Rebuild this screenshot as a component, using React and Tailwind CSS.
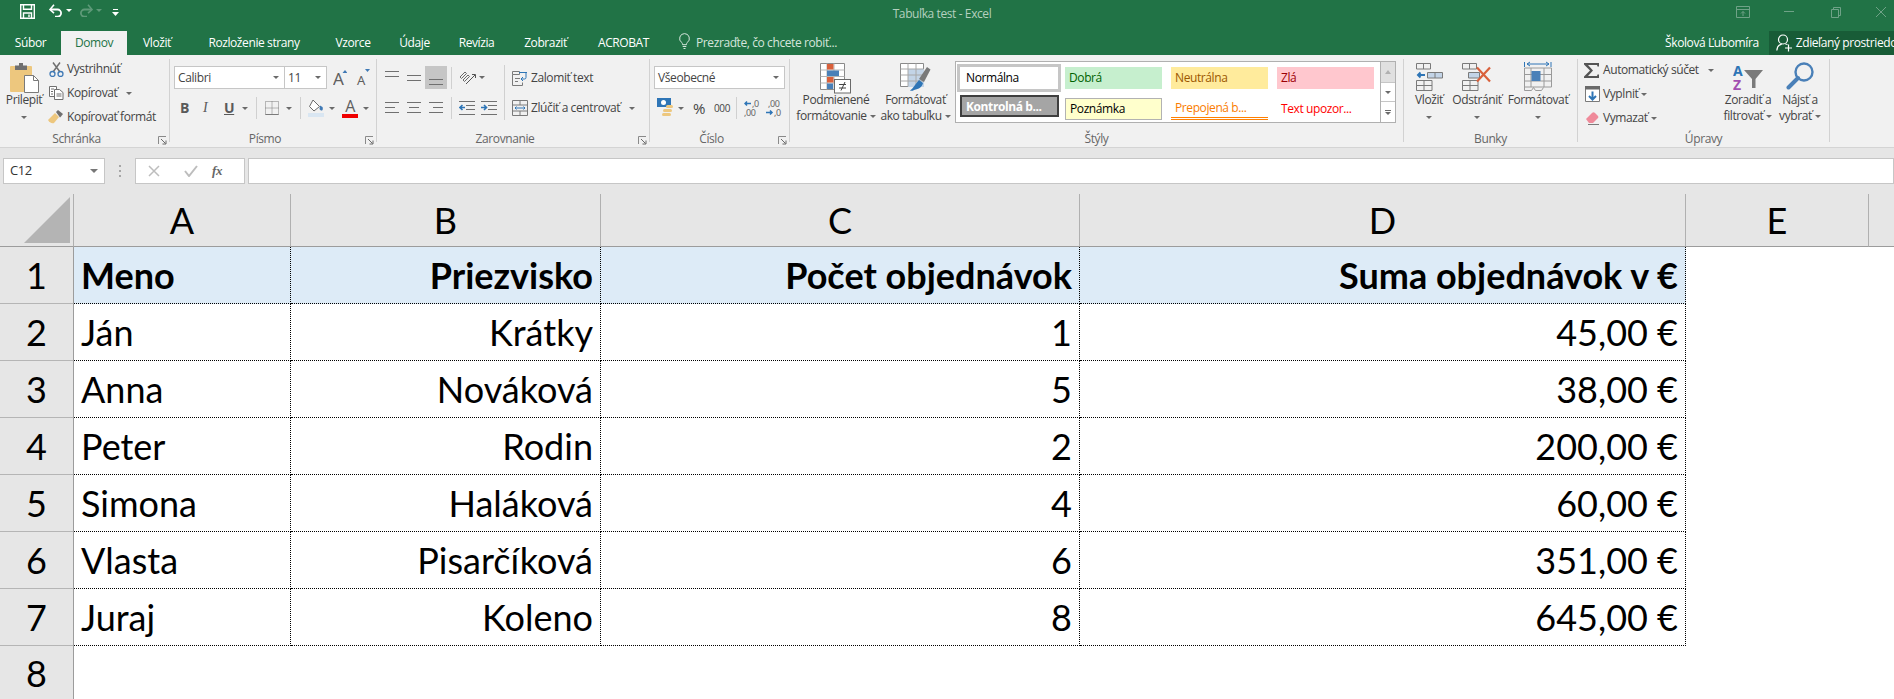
import React from "react";

const G = "#6a6a6a";
const Caret = ({ className = "" }) => (
  <span className={`inline-block w-0 h-0 shrink-0 border-x-[3px] border-x-transparent border-t-[3px] border-t-[#6a6a6a] ${className}`} />
);
const WCaret = () => <span className="inline-block w-0 h-0 shrink-0 ml-[3px] align-middle border-x-[3px] border-x-transparent border-t-[3px] border-t-[#6a6a6a]" />;
const Sep = ({ className = "" }) => <div className={`w-px bg-[#d0d0d0] shrink-0 ${className}`} />;
const Launcher = () => (
  <svg width="9" height="9" viewBox="0 0 9 9" className="absolute right-[2px] bottom-[-3px]">
    <path d="M.5 8V.5H8" fill="none" stroke="#8a8a8a" />
    <path d="M3 3l4.5 4.5M8 4.5V8H4.5" fill="none" stroke="#6a6a6a" />
  </svg>
);

function Group({ w, label, launcher, children }) {
  return (
    <div className={`${w} h-[92px] pt-[4px] pb-[5px] shrink-0`}>
      <div className="h-full border-r border-[#d2d2d2] relative flex flex-col">
        <div className="h-[73px] shrink-0 flex">{children}</div>
        <div className={`h-[14px] shrink-0 leading-[14px] text-center text-[#666666] ${launcher ? "pr-[16px]" : ""}`}>{label}</div>
        {launcher && <Launcher />}
      </div>
    </div>
  );
}

/* ---------- icons ---------- */
const Save = () => (
  <svg width="15" height="15" viewBox="0 0 15 15" fill="none" stroke="#fff" strokeWidth="1.4">
    <path d="M.7.7h13.6v13.6H.7z" />
    <path d="M3.5.7v4.6h8V.7M3.5 14.3V9h8v5.3" />
    <path d="M9 10.5v2.5" />
  </svg>
);
const Undo = ({ c = "#fff" }) => (
  <svg width="14" height="14" viewBox="0 0 14 14" fill="none" stroke={c} strokeWidth="1.8">
    <path d="M1.5 6.5h7a3.6 3.6 0 0 1 0 7.2H6" />
    <path d="M5 1.8L1 6.5l4 3.6" strokeWidth="1.6" />
  </svg>
);
const Redo = ({ c = "#5f9a79" }) => (
  <svg width="14" height="14" viewBox="0 0 14 14" fill="none" stroke={c} strokeWidth="1.8">
    <path d="M12.5 6.5h-7a3.6 3.6 0 0 0 0 7.2H8" />
    <path d="M9 1.8l4 4.7-4 3.6" strokeWidth="1.6" />
  </svg>
);
const Qat = () => (
  <svg width="7" height="8" viewBox="0 0 7 8" fill="#fff">
    <path d="M1 0h5v1H1zM0 3h7L3.5 7z" />
  </svg>
);
const Bulb = () => (
  <svg width="11" height="17" viewBox="0 0 11 17" fill="none" stroke="#d5e5dc" strokeWidth="1">
    <path d="M5.5.6a4.9 4.9 0 0 0-2.8 8.9c.6.5.8 1.300.8 2.200h4c0-.9.2-1.700.8-2.200A4.900 4.900 0 0 0 5.500.6z" />
    <path d="M3.700 13.500h3.600M4.500 15.500h2" />
  </svg>
);
const Person = () => (
  <svg width="17" height="18" viewBox="0 0 17 18" fill="none" stroke="#fff" strokeWidth="1.2">
    <circle cx="7" cy="5.500" r="4.500" />
    <path d="M.8 16.500c.3-3.500 2.500-6 5-6.400M11.500 10.500c-.9-.4-1.600-.5-2.200-.5" />
    <path d="M12.500 10.500v7M9 14h7" />
  </svg>
);
const Paste = () => (
  <svg width="29" height="30" viewBox="0 0 29 30">
    <rect x="0" y="3" width="22" height="26" rx="1" fill="#edc77e" />
    <path d="M5 2.500h12v4.500H5z" fill="#6f6f6f" />
    <rect x="9" y="0" width="4" height="3" fill="#6f6f6f" />
    <path d="M14.500 12.500h9l5 5v12h-14z" fill="#fff" stroke="#7a7a7a" />
    <path d="M23.500 12.500v5h5" fill="none" stroke="#7a7a7a" />
  </svg>
);
const Scissors = () => (
  <svg width="15" height="15" viewBox="0 0 15 15" fill="none">
    <path d="M4 10L11 .5M11 10L4 .5" stroke="#6f6f6f" strokeWidth="1.500" />
    <circle cx="3.500" cy="12" r="2.500" stroke="#3f79b5" strokeWidth="1.300" />
    <circle cx="11.500" cy="12" r="2.500" stroke="#3f79b5" strokeWidth="1.300" />
  </svg>
);
const Copy = () => (
  <svg width="15" height="14" viewBox="0 0 15 14" fill="#fff" stroke="#6f6f6f">
    <path d="M.5.500h7v10h-7z" />
    <path d="M5.500 3.500h5l3.500 3v7h-8.500z" />
    <path d="M2 3h3M2 5.500h2M2 8h2M7.500 8h5M7.500 10h5" fill="none" />
  </svg>
);
const Brush = () => (
  <svg width="16" height="14" viewBox="0 0 16 14">
    <path d="M0 10l7-7 4 4-5 6c-2 1-5-1-6-3z" fill="#edc77e" />
    <path d="M8 2l2-2 5 4-2 2.500-1 1z" fill="#6f6f6f" />
  </svg>
);
const BigA = ({ up }) => (
  <svg width="14" height="17" viewBox="0 0 14 17" className="shrink-0">
    <text x={up ? 0 : 1} y={16} fontSize={up ? 17 : 13} fill="#5f5f5f" fontFamily="Noto Sans">A</text>
    <path d={up ? "M9.500 4L12 1l2.500 3z" : "M9 0h5L11.500 3z"} fill="#3f79b5" />
  </svg>
);
const BordersIc = () => (
  <svg width="14" height="14" viewBox="0 0 14 14" fill="none" stroke="#7a7a7a" strokeDasharray="1 1">
    <path d="M.5.500h13v13H.5zM7 .5v13M.5 7h13" />
    <path d="M.5 13.500h13" strokeDasharray="none" />
  </svg>
);
const Fill = () => (
  <svg width="16" height="18" viewBox="0 0 16 18">
    <path d="M5 1l6.500 6.500L6 12 1.500 7.500z" fill="#fff" stroke="#6a6a6a" />
    <path d="M12 6.500l2.500 1.500c.6 1.500.3 3-.5 3.500-1 .3-2-.5-2.500-1.500z" fill="#3f79b5" />
    <rect x="0" y="14" width="16" height="4" fill="#d9e6f2" />
  </svg>
);
const FontA = () => (
  <div className="relative w-[16px] h-[20px] shrink-0 flex flex-col items-center">
    <span className="text-[16px] leading-[16px] text-[#5f5f5f]">A</span>
    <div className="w-[16px] h-[4px] bg-[#f00000] mt-[0px]" />
  </div>
);
const Lines = ({ ys, x1 = [0, 0, 0], x2 = [14, 14, 14], className = "" }) => (
  <svg width="14" height="20" viewBox="0 0 14 20" className={`shrink-0 ${className}`}>
    {ys.map((y, i) => (
      <path key={i} d={`M${x1[i]} ${y + 0.5}H${x2[i]}`} stroke="#707070" />
    ))}
  </svg>
);
const Orient = () => (
  <svg width="17" height="17" viewBox="0 0 17 17" fill="none" stroke="#6a6a6a">
    <path d="M1 8l5-5 1.500 1.500-5 5zM4 11l5-5 1.500 1.500-5 5z" />
    <path d="M7 15L16 6M13 5.500h3.500V9" stroke="#555" />
  </svg>
);
const Indent = ({ rev }) => (
  <svg width="16" height="15" viewBox="0 0 16 15" fill="none">
    <path d="M0 .5h16M7 4.500h9M7 8.500h9M0 13.500h16" stroke="#707070" />
    <path d={rev ? "M0 6.500h5M3 4l2.500 2.500L3 9" : "M6 6.500H1M3.500 4L1 6.500 3.500 9"} stroke="#2e75b6" strokeWidth="1.600" />
  </svg>
);
const Wrap = () => (
  <svg width="16" height="17" viewBox="0 0 16 17" fill="none">
    <path d="M.5 2.500h7v3h-7zM.5 5.500v11h10v-3" stroke="#7a7a7a" />
    <path d="M3 9.500h5M3 12.500h3" stroke="#7a7a7a" />
    <path d="M7 3.500h8M14 4v4.500a1.500 1.500 0 0 1-1.500 1.500H9M11 8l-2 2 2 2" stroke="#2e75b6" />
  </svg>
);
const Merge = () => (
  <svg width="16" height="16" viewBox="0 0 16 16" fill="none">
    <path d="M.5.500h15v15H.5zM.5 5h15M.5 11h15M8 .5V5M8 11v4.500" stroke="#7a7a7a" />
    <path d="M3 8h10M4.500 6.500L3 8l1.500 1.500M11.500 6.500L13 8l-1.500 1.500" stroke="#2e75b6" />
  </svg>
);
const Currency = () => (
  <svg width="18" height="20" viewBox="0 0 18 20">
    <rect x="0" y="0" width="14" height="9" fill="#2e75b6" />
    <circle cx="6.500" cy="4.500" r="2.500" fill="#fff" />
    <rect x="9" y="7" width="7" height="3" rx="1.500" fill="#edc77e" />
    <rect x="6" y="11" width="9" height="3" rx="1.500" fill="#edc77e" />
    <rect x="5" y="15" width="9" height="3" rx="1.500" fill="#edc77e" />
  </svg>
);
const DecInc = () => (
  <svg width="17" height="17" viewBox="0 0 17 17">
    <path d="M7 3.500H1M3 1.500l-2 2 2 2" fill="none" stroke="#2e75b6" strokeWidth="1.500" />
    <text x="8" y="7" fontSize="9" fill="#666" fontFamily="Noto Sans">,0</text>
    <text x="0" y="16" fontSize="9" fill="#666" fontFamily="Noto Sans">,00</text>
  </svg>
);
const DecDec = () => (
  <svg width="17" height="17" viewBox="0 0 17 17">
    <text x="2" y="7" fontSize="9" fill="#666" fontFamily="Noto Sans">,00</text>
    <path d="M0 12.500h6M4 10.500l2 2-2 2" fill="none" stroke="#2e75b6" strokeWidth="1.500" />
    <text x="8" y="16" fontSize="9" fill="#666" fontFamily="Noto Sans">,0</text>
  </svg>
);
const CondFmt = () => (
  <svg width="32" height="31" viewBox="0 0 32 31">
    <path d="M.5.500h24v26H.5z" fill="#fff" stroke="#8a8a8a" />
    <path d="M.5 7h24M.5 13.500h24M.5 20h24M7 .5v26M14 .5v26" stroke="#b5b5b5" fill="none" />
    <rect x="7" y="1" width="6.500" height="5.500" fill="#d9603b" />
    <rect x="7" y="7.500" width="12" height="5.500" fill="#4a80b8" />
    <rect x="7" y="14" width="6.500" height="5.500" fill="#d9603b" />
    <rect x="7" y="20.500" width="6" height="5.500" fill="#4a80b8" />
    <rect x="14.500" y="16.500" width="16" height="13.500" fill="#fff" stroke="#6a6a6a" />
    <path d="M19 21.500h7M19 25h7M25 19l-4 8.500" stroke="#444" fill="none" />
  </svg>
);
const FmtTable = () => (
  <svg width="31" height="30" viewBox="0 0 31 30">
    <path d="M.5.500h23v23H.5z" fill="#fff" stroke="#8a8a8a" />
    <rect x="8" y="6" width="16" height="18" fill="#c3d4e7" />
    <path d="M.5 6h23M.5 12h23M.5 18h23M8 .5v23M16 .5v23" stroke="#a8a8a8" fill="none" />
    <path d="M19 16L27 4l3.500 2.500L24 19z" fill="#7a7a7a" />
    <path d="M19 17l4 3c-1 4-4 6-9 7-1 1-3 1-4 .5 3-2 5-6 9-10.500z" fill="#2e75b6" />
  </svg>
);
const CellsIns = () => (
  <svg width="27" height="28" viewBox="0 0 27 28" fill="none">
    <path d="M.5.500h14v5.500H.5zM7.500.5v5.500M.5 17.500h15.500v10H.5zM.5 22.500h15.500M8 17.500v10" stroke="#7a7a7a" />
    <path d="M11.500 9.500h15v5.500h-15zM19 9.500v5.500" fill="#c3d4e7" stroke="#7a7a7a" />
    <path d="M9 12H2M4.500 9.500L2 12l2.500 2.500" stroke="#2e75b6" strokeWidth="2" />
  </svg>
);
const CellsDel = () => (
  <svg width="30" height="28" viewBox="0 0 30 28" fill="none">
    <path d="M.5.500h14v5.500H.5zM7.500.5v5.500M.5 17.500h15.500v10H.5zM.5 22.500h15.500M8 17.500v10" stroke="#7a7a7a" />
    <path d="M6.500 9.500h11v5.500h-11z" fill="#c3d4e7" stroke="#7a7a7a" />
    <path d="M15 4.500l13 14M28 4.500l-13 14" stroke="#d9603b" strokeWidth="2.200" />
  </svg>
);
const CellsFmt = () => (
  <svg width="28" height="30" viewBox="0 0 28 30" fill="none">
    <path d="M.5 1v5M27 1v5M3 3h22M6 1L3 3l3 2M22 1l3 2-3 2" stroke="#2e75b6" />
    <path d="M.5 7h27v19H.5zM.5 13.500h27M.5 20h27M7 7v19M20 7v19M.5 26v3.500h7l2-3 2 3h6l2-3" stroke="#9a9a9a" />
    <rect x="7.500" y="10" width="9" height="10" fill="#4a80b8" />
  </svg>
);
const Sigma = () => (
  <svg width="16" height="15" viewBox="0 0 16 15">
    <path d="M0 0h15v3.500h-1.500L13 2H4l5 5.500L4 13h9l.5-1.500H15V15H0v-1.500L6 7.500 0 1.500z" fill="#555" />
  </svg>
);
const FillDown = () => (
  <svg width="15" height="16" viewBox="0 0 15 16" fill="none">
    <path d="M.5.500h14v15H.5z" fill="#fff" stroke="#7a7a7a" />
    <rect x="0" y="0" width="15" height="3.500" fill="#6a6a6a" />
    <path d="M7.500 5.500v7.500M4 10l3.500 3.500L11 10" stroke="#2e75b6" strokeWidth="2" />
  </svg>
);
const Eraser = () => (
  <svg width="14" height="13" viewBox="0 0 14 13">
    <path d="M1 7l6-6c1-1 2-1 3 0l3 3c.5 1 .5 1.500 0 2l-5 5H4z" fill="#ef8a9a" />
    <path d="M3 12.500h11" stroke="#7a7a7a" />
  </svg>
);
const Sort = () => (
  <svg width="30" height="27" viewBox="0 0 30 27">
    <text x="0" y="12" fontSize="14" fontWeight="700" fill="#2e75b6" fontFamily="Noto Sans">A</text>
    <text x="0" y="26" fontSize="14" fontWeight="700" fill="#a24fb0" fontFamily="Noto Sans">Z</text>
    <path d="M11 6h19l-7.500 9v9h-3.500v-9z" fill="#7a7a7a" />
  </svg>
);
const Find = () => (
  <svg width="28" height="28" viewBox="0 0 28 28" fill="none">
    <circle cx="18" cy="10" r="8.500" stroke="#4a80b8" strokeWidth="2.400" />
    <path d="M12 16L2.500 25.500" stroke="#4a80b8" strokeWidth="4" strokeLinecap="round" />
  </svg>
);

/* ---------- title + tabs ---------- */
const Tab = ({ w, children }) => <div className={`${w} h-[24px] leading-[24px] text-center text-white shrink-0 whitespace-nowrap`}>{children}</div>;

function TitleBar() {
  return (
    <div className="bg-[#217346] h-[55px]">
      <div className="h-[31px] flex items-start relative">
        <div className="ml-[20px] mt-[4px]"><Save /></div>
        <div className="ml-[14px] mt-[3px]"><Undo /></div>
        <span className="ml-[3px] mt-[9px] w-0 h-0 border-x-[3px] border-x-transparent border-t-[3px] border-t-white" />
        <div className="ml-[7px] mt-[3px]"><Redo /></div>
        <span className="ml-[3px] mt-[9px] w-0 h-0 border-x-[3px] border-x-transparent border-t-[3px] border-t-[#5f9a79]" />
        <div className="ml-[10px] mt-[9px]"><Qat /></div>
        <div className="ml-[773px] w-[100px] mt-[6px] h-[16px] leading-[16px] text-center whitespace-nowrap text-[#b4d0bf]">Tabuľka test - Excel</div>
        <svg className="ml-[744px] mt-[6px]" width="15" height="13" viewBox="0 0 15 13" fill="none" stroke="#6fa287">
          <path d="M.5.500h13v11H.5zM.5 3.500h13M7 10V5.500M5 7.500l2-2 2 2" />
        </svg>
        <div className="ml-[33px] mt-[11px] w-[10px] h-px bg-[#6fa287]" />
        <svg className="ml-[37px] mt-[7px]" width="10" height="11" viewBox="0 0 10 11" fill="none" stroke="#6fa287">
          <path d="M.5 2.500h7v8h-7zM2.500 2.500v-2h7v8h-2" />
        </svg>
        <svg className="ml-[35px] mt-[7px]" width="10" height="10" viewBox="0 0 10 10" stroke="#6fa287"><path d="M0 0l10 10M10 0L0 10" /></svg>
      </div>
      <div className="h-[24px] flex">
        <Tab w="w-[61px]">Súbor</Tab>
        <div className="w-[66px] h-[24px] leading-[24px] text-center bg-[#f1f1f1] text-[#217346] shrink-0">Domov</div>
        <Tab w="w-[60px]">Vložiť</Tab>
        <Tab w="w-[134px]">Rozloženie strany</Tab>
        <Tab w="w-[64px]">Vzorce</Tab>
        <Tab w="w-[59px]">Údaje</Tab>
        <Tab w="w-[65px]">Revízia</Tab>
        <Tab w="w-[73px]">Zobraziť</Tab>
        <Tab w="w-[83px]">ACROBAT</Tab>
        <div className="ml-[14px] self-start mt-[2px]"><Bulb /></div>
        <div className="ml-[6px] h-[24px] leading-[24px] whitespace-nowrap text-[#d5e5dc] w-[145px]">Prezraďte, čo chcete robiť...</div>
        <div className="ml-[828px] w-[95px] h-[24px] leading-[24px] whitespace-nowrap text-white text-center">Školová Ľubomíra</div>
        <div className="ml-[10px] w-[135px] h-[24px] bg-[#185c37] flex items-center overflow-hidden text-white">
          <div className="ml-[7px] shrink-0"><Person /></div>
          <span className="ml-[3px] whitespace-nowrap">Zdieľaný prostriedok</span>
        </div>
      </div>
    </div>
  );
}

/* ---------- ribbon ---------- */
const SmallRow = ({ icon, text, caret, caretClass = "ml-[4px]" }) => (
  <div className="h-[24px] flex items-center whitespace-nowrap">
    <div className="w-[16px] shrink-0 flex justify-center">{icon}</div>
    <span className="ml-[3px]">{text}</span>
    {caret && <Caret className={caretClass} />}
  </div>
);
const BigBtn = ({ w, icon, top, l1, l2, caret2 }) => (
  <div className={`${w} shrink-0 flex flex-col items-center`}>
    <div className={`${top} h-[33px] flex items-start justify-center`}>{icon}</div>
    <div className="h-[16px] leading-[16px] whitespace-nowrap">{l1}</div>
    <div className="h-[16px] leading-[16px] whitespace-nowrap flex items-center justify-center">{l2}{caret2 && <Caret className={l2 ? "ml-[3px]" : "mt-[3px]"} />}</div>
  </div>
);
const Select = ({ w, text, cls = "" }) => (
  <div className={`${w} h-[23px] bg-white border border-[#c6c6c6] flex items-center justify-between pl-[3px] pr-[5px] shrink-0 ${cls}`}>
    <span>{text}</span><Caret />
  </div>
);
const Style = ({ children, cls }) => (
  <div className={`h-[22px] leading-[20px] pl-[4px] whitespace-nowrap overflow-hidden ${cls}`}>{children}</div>
);

function Ribbon() {
  return (
    <div className="h-[93px] bg-[#f1f1f1] border-b border-[#d4d4d4] flex text-[#444444]">
      <Group w="w-[170px]" label="Schránka" launcher>
        <BigBtn w="w-[48px]" top="pt-[4px]" icon={<Paste />} l1="Prilepiť" l2="" caret2 />
        <div className="-mt-[2px]">
          <SmallRow icon={<Scissors />} text="Vystrihnúť" />
          <SmallRow icon={<Copy />} text="Kopírovať" caret caretClass="ml-[9px]" />
          <SmallRow icon={<Brush />} text="Kopírovať formát" />
        </div>
      </Group>

      <Group w="w-[207px]" label="Písmo" launcher>
        <div className="pt-[7px]">
          <div className="flex items-center">
            <Select w="w-[111px] ml-[4px]" text="Calibri" />
            <Select w="w-[43px]" text="11" cls="-ml-px" />
            <div className="ml-[6px]"><BigA up /></div>
            <div className="ml-[9px]"><BigA /></div>
          </div>
          <div className="mt-[7px] h-[24px] flex items-center text-[#5a5a5a]">
            <span className="ml-[10px] w-[8px] text-[14px] font-bold leading-none">B</span>
            <span className="ml-[15px] w-[7px] text-[14px] italic leading-none font-['Liberation_Serif']">I</span>
            <span className="ml-[14px] w-[10px] text-[14px] font-bold leading-none underline">U</span>
            <Caret className="ml-[8px]" />
            <Sep className="ml-[8px] h-[22px]" />
            <div className="ml-[8px]"><BordersIc /></div>
            <Caret className="ml-[7px]" />
            <Sep className="ml-[8px] h-[22px]" />
            <div className="ml-[7px]"><Fill /></div>
            <Caret className="ml-[5px]" />
            <div className="ml-[7px]"><FontA /></div>
            <Caret className="ml-[5px]" />
          </div>
        </div>
      </Group>

      <Group w="w-[273px]" label="Zarovnanie" launcher>
        <div className="pt-[7px] w-[127px] shrink-0">
          <div className="h-[23px] flex items-center">
            <Lines ys={[3, 8]} className="ml-[8px]" />
            <Lines ys={[7, 12]} className="ml-[8px]" />
            <div className="ml-[4px] w-[22px] h-[23px] bg-[#c6c6c6] flex items-center justify-center"><Lines ys={[11, 16]} /></div>
            <Sep className="ml-[4px] h-[22px]" />
            <div className="ml-[7px]"><Orient /></div>
            <Caret className="ml-[3px]" />
          </div>
          <div className="mt-[7px] h-[24px] flex items-center">
            <Lines ys={[4, 9, 14]} x2={[14, 10, 14]} className="ml-[8px]" />
            <Lines ys={[4, 9, 14]} x1={[0, 2, 0]} x2={[14, 12, 14]} className="ml-[8px]" />
            <Lines ys={[4, 9, 14]} x1={[0, 4, 0]} className="ml-[8px]" />
            <Sep className="ml-[8px] h-[22px]" />
            <div className="ml-[7px]"><Indent /></div>
            <div className="ml-[6px]"><Indent rev /></div>
          </div>
        </div>
        <Sep className="h-[55px] mt-[6px]" />
        <div className="pt-[7px]">
          <div className="h-[23px] flex items-center ml-[7px]"><Wrap /><span className="ml-[3px]">Zalomiť text</span></div>
          <div className="mt-[7px] h-[24px] flex items-center ml-[7px]"><Merge /><span className="ml-[3px]">Zlúčiť a centrovať</span><Caret className="ml-[9px]" /></div>
        </div>
      </Group>

      <Group w="w-[140px]" label="Číslo" launcher>
        <div className="pt-[7px]">
          <Select w="w-[131px] ml-[4px]" text="Všeobecné" />
          <div className="mt-[7px] h-[24px] flex items-center">
            <div className="ml-[7px]"><Currency /></div>
            <Caret className="ml-[3px]" />
            <span className="ml-[9px] w-[13px] text-[15px] leading-none">%</span>
            <span className="ml-[8px] w-[16px] text-[10px] leading-none">000</span>
            <Sep className="ml-[6px] h-[22px]" />
            <div className="ml-[7px]"><DecInc /></div>
            <div className="ml-[5px]"><DecDec /></div>
          </div>
        </div>
      </Group>

      <Group w="w-[614px]" label="Štýly">
        <div className="ml-[6px] flex">
          <BigBtn w="w-[80px]" top="pt-[4px]" icon={<CondFmt />} l1="Podmienené" l2="formátovanie" caret2 />
          <BigBtn w="w-[79px]" top="pt-[4px]" icon={<FmtTable />} l1="Formátovať" l2="ako tabuľku" caret2 />
        </div>
        <div className="mt-[2px] w-[426px] h-[62px] bg-white border border-[#b0b0b0] grid grid-cols-[106px_106px_106px_100px] content-start pt-[5px] shrink-0 relative">
          <Style cls="ml-[1px] mr-[1px] -mt-[3px] h-[28px] leading-[22px] border-[3px] border-[#c6c6c6] text-black pl-[6px]">Normálna</Style>
          <Style cls="mr-[6px] ml-[3px] bg-[#c6efce] text-[#006100] leading-[22px]">Dobrá</Style>
          <Style cls="mr-[6px] ml-[3px] bg-[#ffeb9c] text-[#9c5700] leading-[22px]">Neutrálna</Style>
          <Style cls="ml-[3px] bg-[#ffc7ce] text-[#9c0006] leading-[22px]">Zlá</Style>
          <Style cls="mt-[3px] ml-[4px] mr-[3px] bg-[#a5a5a5] border-[2px] border-double border-[#3f3f3f] text-white font-bold leading-[18px] pl-[2px]">Kontrolná b...</Style>
          <Style cls="mt-[6px] mr-[6px] ml-[3px] bg-[#ffffcc] border border-[#b2b2b2] text-black">Poznámka</Style>
          <Style cls="mt-[6px] mr-[6px] ml-[3px] text-[#fa7d00] border-b-[3px] border-double border-[#ff8001] leading-[20px]">Prepojená b...</Style>
          <Style cls="mt-[6px] ml-[3px] text-[#ff0000] leading-[22px]">Text upozor...</Style>
        </div>
        <div className="mt-[2px] w-[15px] h-[62px] shrink-0 flex flex-col border-y border-r border-[#b0b0b0] bg-white">
          <div className="h-[20px] bg-[#e0e0e0] flex items-center justify-center"><span className="w-0 h-0 border-x-[3px] border-x-transparent border-b-[4px] border-b-[#b0b0b0]" /></div>
          <div className="h-[20px] border-y border-[#c6c6c6] flex items-center justify-center"><Caret /></div>
          <div className="flex-1 flex flex-col items-center justify-center gap-[1px]"><div className="w-[6px] h-px bg-[#6a6a6a]" /><Caret /></div>
        </div>
      </Group>

      <Group w="w-[174px]" label="Bunky">
        <div className="ml-[7px] flex">
          <BigBtn w="w-[36px]" top="pt-[4px]" icon={<CellsIns />} l1="Vložiť" l2="" caret2 />
          <BigBtn w="w-[60px]" top="pt-[4px]" icon={<CellsDel />} l1="Odstrániť" l2="" caret2 />
          <BigBtn w="w-[62px]" top="pt-[2px]" icon={<CellsFmt />} l1="Formátovať" l2="" caret2 />
        </div>
      </Group>

      <Group w="w-[252px]" label="Úpravy">
        <div className="ml-[6px] w-[132px] shrink-0 -mt-[1px]">
          <SmallRow icon={<Sigma />} text="Automatický súčet" caret caretClass="ml-[9px]" />
          <SmallRow icon={<FillDown />} text="Vyplniť" caret caretClass="ml-[3px]" />
          <SmallRow icon={<Eraser />} text="Vymazať" caret caretClass="ml-[3px]" />
        </div>
        <BigBtn w="w-[64px]" top="pt-[5px]" icon={<Sort />} l1="Zoradiť a" l2="filtrovať" caret2 />
        <BigBtn w="w-[40px]" top="pt-[3px]" icon={<Find />} l1="Nájsť a" l2="vybrať" caret2 />
      </Group>
    </div>
  );
}

function FormulaBar() {
  return (
    <div className="h-[46px] bg-[#e6e6e6] flex items-start pt-[10px]">
      <div className="ml-[3px] w-[102px] h-[26px] bg-white border border-[#c6c6c6] flex items-center justify-between pl-[6px] pr-[6px] text-[13px] text-[#333]">
        <span>C12</span>
        <span className="w-0 h-0 border-x-[4px] border-x-transparent border-t-[4px] border-t-[#777]" />
      </div>
      <div className="ml-[14px] mt-[7px] flex flex-col gap-[3px]">
        <div className="w-[2px] h-[2px] bg-[#a6a6a6]" /><div className="w-[2px] h-[2px] bg-[#a6a6a6]" /><div className="w-[2px] h-[2px] bg-[#a6a6a6]" />
      </div>
      <div className="ml-[14px] w-[110px] h-[26px] bg-white border border-[#c6c6c6] flex items-center">
        <svg className="ml-[12px]" width="12" height="12" viewBox="0 0 12 12" stroke="#bdbdbd" strokeWidth="1.500"><path d="M1 1l10 10M11 1L1 11" /></svg>
        <svg className="ml-[24px]" width="14" height="12" viewBox="0 0 14 12" fill="none" stroke="#bdbdbd" strokeWidth="2"><path d="M1 6l4 5 8-10" /></svg>
        <span className="ml-[14px] text-[13px] italic font-bold text-[#666] font-['Liberation_Serif']">fx</span>
      </div>
      <div className="ml-[3px] flex-1 h-[26px] bg-white border border-[#c6c6c6]" />
    </div>
  );
}

/* ---------- sheet ---------- */
const rows = [
  ["Meno", "Priezvisko", "Počet objednávok", "Suma objednávok v €"],
  ["Ján", "Krátky", "1", "45,00 €"],
  ["Anna", "Nováková", "5", "38,00 €"],
  ["Peter", "Rodin", "2", "200,00 €"],
  ["Simona", "Haláková", "4", "60,00 €"],
  ["Vlasta", "Pisarčíková", "6", "351,00 €"],
  ["Juraj", "Koleno", "8", "645,00 €"],
];
const ColH = ({ children }) => (
  <div className="bg-[#e6e6e6] border-r border-b border-r-[#b0b0b0] border-b-[#9c9c9c] flex items-center justify-center">{children}</div>
);
const RowH = ({ children, last }) => (
  <div className={`bg-[#e6e6e6] border-r border-r-[#9c9c9c] flex items-center justify-center ${last ? "" : "border-b border-b-[#b5b5b5]"}`}>{children}</div>
);

function Sheet() {
  return (
    <div className="h-[505px] grid grid-cols-[74px_217px_310px_479px_606px_183px_25px] grid-rows-[53px_repeat(7,57px)_53px] font-['Lato'] text-[36px] leading-none text-black bg-white">
      <div className="bg-[#e6e6e6] border-r border-b border-r-[#b0b0b0] border-b-[#9c9c9c] flex items-end justify-end pr-[3px] pb-[3px]">
        <svg width="46" height="46" viewBox="0 0 46 46"><path d="M46 0v46H0z" fill="#b4b4b4" /></svg>
      </div>
      {["A", "B", "C", "D", "E"].map((c) => <ColH key={c}>{c}</ColH>)}
      <div className="bg-[#e6e6e6] border-b border-b-[#9c9c9c]" />
      {rows.map((r, i) => (
        <React.Fragment key={i}>
          <RowH>{i + 1}</RowH>
          {r.map((t, j) => (
            <div key={j} className={`border-r border-b border-dotted border-black flex items-center px-[7px] whitespace-nowrap ${j === 0 ? "justify-start" : "justify-end"} ${i === 0 ? "bg-[#ddebf7] font-bold" : ""}`}>{t}</div>
          ))}
          <div className="col-span-2" />
        </React.Fragment>
      ))}
      <RowH last>8</RowH>
      <div className="col-span-6" />
    </div>
  );
}

export default function App() {
  return (
    <div className="w-[1894px] h-[699px] overflow-hidden font-['Open_Sans',sans-serif] text-[12px] tracking-[-0.4px]">
      <TitleBar />
      <Ribbon />
      <FormulaBar />
      <div className="tracking-normal"><Sheet /></div>
    </div>
  );
}
